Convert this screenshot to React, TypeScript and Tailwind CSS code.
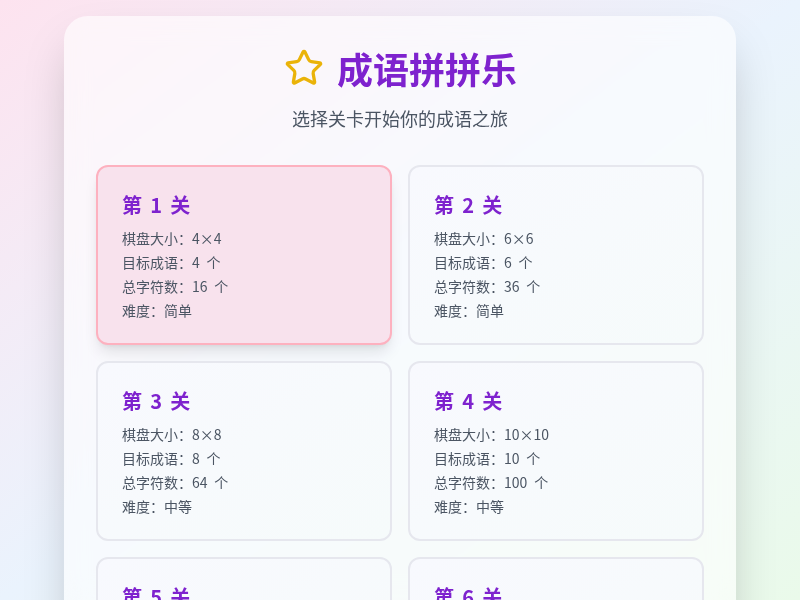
import React, { useState } from 'react';
import { Star } from 'lucide-react';

const levels = [
  { id: 1, size: 4, difficulty: '简单' },
  { id: 2, size: 6, difficulty: '简单' },
  { id: 3, size: 8, difficulty: '中等' },
  { id: 4, size: 10, difficulty: '中等' },
  { id: 5, size: 12, difficulty: '困难' },
  { id: 6, size: 14, difficulty: '困难' },
];

const App: React.FC = () => {
  const [selected, setSelected] = useState(1);

  return (
    <div
      className="min-h-screen bg-fixed bg-gradient-to-br from-[#fde3ef] via-[#eaf3fd] to-[#eafaea] pt-4 pb-8"
      style={{ fontFamily: '"Noto Sans CJK SC", "Noto Sans", sans-serif' }}
    >
      <div className="max-w-2xl mx-auto rounded-3xl bg-white/60 backdrop-blur-md shadow-2xl p-8">
        {/* Header */}
        <div className="flex items-center justify-center gap-3.5">
          <Star size={40} strokeWidth={2} className="text-[#eab308] translate-x-px" />
          <h1 className="text-4xl font-bold text-[#7e22ce]">成语拼拼乐</h1>
        </div>
        <p className="mt-4 mb-[33px] text-center text-lg leading-7 text-[#4b5563]">选择关卡开始你的成语之旅</p>

        {/* Levels */}
        <div className="grid grid-cols-2 gap-4">
          {levels.map((level) => {
            const active = selected === level.id;
            return (
              <button
                key={level.id}
                onClick={() => setSelected(level.id)}
                className={`text-left [word-spacing:0.23em] rounded-xl border-2 px-6 pt-6 pb-[23px] transition-all ${
                  active
                    ? 'border-[#fdb1bf] bg-[#f8e2ed] shadow-lg'
                    : 'border-[#e6e7ee] bg-gradient-to-br from-[#f8f9fe] to-[#f6fbfb]'
                }`}
              >
                <h2 className="text-xl font-bold text-[#7e22ce] mb-[9px]">第 {level.id} 关</h2>
                <div className="space-y-1 text-sm text-[#4b5563]">
                  <p>棋盘大小：{level.size}×{level.size}</p>
                  <p>目标成语：{level.size} 个</p>
                  <p>总字符数：{level.size * level.size} 个</p>
                  <p>难度：{level.difficulty}</p>
                </div>
              </button>
            );
          })}
        </div>
      </div>
    </div>
  );
};

export default App;
